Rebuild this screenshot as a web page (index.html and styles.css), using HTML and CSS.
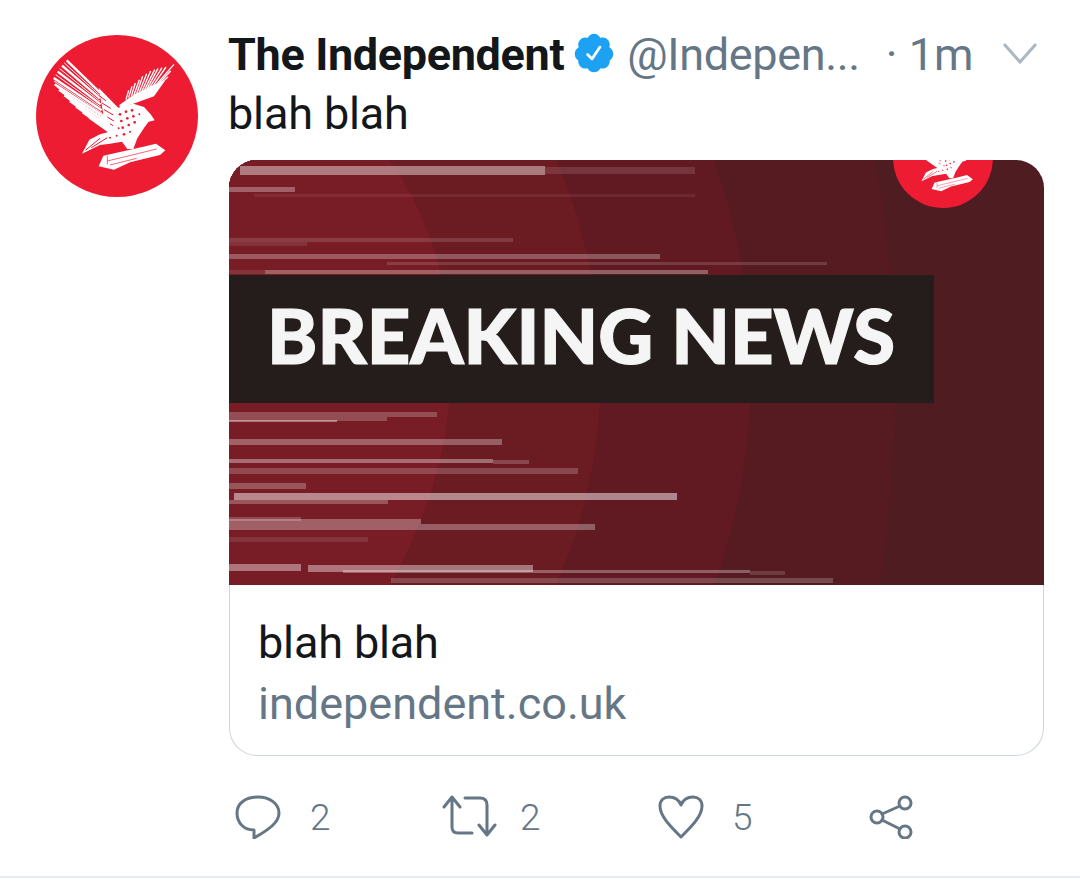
FILE: index.html
```html
<!DOCTYPE html>
<html lang="en">
<head>
<meta charset="utf-8">
<title>The Independent tweet</title>
<link rel="stylesheet" href="styles.css">
</head>
<body>
<svg class="defs" width="0" height="0" aria-hidden="true">
  <symbol id="eagle" viewBox="48 42 486 486">
    <path class="eagle-fill" d="M236 200 L296 262 L300 350 L226 306 L250 280 Z"/>
    <g class="feathers-left">
      <path d="M140 118 L240 215"/><path d="M126 134 L240 232"/><path d="M113 152 L242 250"/><path d="M101 171 L245 268"/>
      <path d="M104 190 L250 285"/><path d="M117 206 L256 300"/><path d="M133 223 L262 315"/><path d="M150 240 L270 325"/>
      <path d="M168 257 L278 335"/><path d="M188 274 L285 342"/><path d="M208 290 L290 348"/>
    </g>
    <g class="feathers-fine">
      <path d="M133 126 L240 224"/><path d="M119 143 L240 241"/><path d="M107 161 L243 259"/><path d="M102 180 L247 277"/>
      <path d="M110 198 L253 293"/><path d="M125 214 L259 308"/><path d="M141 231 L266 320"/><path d="M159 248 L274 330"/>
      <path d="M178 265 L281 339"/><path d="M198 282 L288 345"/>
    </g>
    <g class="hatch-left">
      <path d="M238 224 L258 240"/><path d="M246 246 L272 262"/><path d="M252 266 L280 282"/><path d="M262 288 L288 304"/><path d="M270 308 L294 324"/>
    </g>
    <path class="eagle-fill" d="M298 252 L340 222 L392 196 L436 178 L402 226 L340 248 L300 262 Z"/>
    <g class="feathers-right">
      <path d="M318 236 L326 208"/><path d="M326 230 L336 196"/><path d="M334 226 L346 186"/><path d="M342 222 L358 176"/>
      <path d="M350 218 L368 166"/><path d="M358 214 L380 158"/><path d="M366 210 L392 150"/><path d="M374 206 L404 146"/>
      <path d="M382 202 L414 142"/><path d="M390 198 L426 140"/><path d="M398 196 L438 138"/><path d="M406 194 L462 130"/>
      <path d="M414 190 L452 150"/><path d="M420 188 L444 168"/>
    </g>
    <path class="eagle-fill" d="M290 262 L340 248 L372 258 L392 280 L404 298 L386 302 L374 318 L352 352 L340 384 L322 384 L306 362 L270 368 L240 372 L186 398 L208 356 L240 340 L276 330 Z"/>
    <g class="eagle-cuts">
      <path d="M196 388 L240 352"/><path d="M214 380 L262 350"/>
    </g>
    <path class="eagle-fill" d="M236 436 L250 404 L350 382 L408 368 L436 388 L420 402 L330 424 L282 446 Z"/>
    <g class="eagle-dots">
      <circle cx="300" cy="280" r="4"/><circle cx="318" cy="272" r="4"/><circle cx="336" cy="268" r="4"/>
      <circle cx="304" cy="300" r="4"/><circle cx="322" cy="292" r="4"/><circle cx="340" cy="286" r="4"/><circle cx="358" cy="280" r="3"/>
      <circle cx="308" cy="320" r="4"/><circle cx="326" cy="312" r="4"/><circle cx="344" cy="304" r="4"/>
      <circle cx="296" cy="322" r="3"/><circle cx="290" cy="344" r="3"/><circle cx="312" cy="340" r="4"/><circle cx="330" cy="332" r="3"/>
      <circle cx="270" cy="350" r="3"/>
    </g>
    <path class="eagle-line" d="M262 420 L410 384 M270 432 L350 412 M262 404 L262 430"/>
  </symbol>
</svg>

<article class="tweet">
  <svg class="avatar" viewBox="0 0 162 162" role="img" aria-label="The Independent logo">
    <circle class="logo-red" cx="81" cy="81" r="81"/>
    <use href="#eagle" width="162" height="162"/>
  </svg>

  <div class="content">
    <header class="meta">
      <span class="name">The Independent</span>
      <svg class="badge" viewBox="0 0 24 24" aria-label="Verified"><path d="M22.5 12.5c0-1.58-.875-2.95-2.148-3.6.154-.435.238-.905.238-1.4 0-2.21-1.71-3.998-3.818-3.998-.47 0-.92.084-1.336.25C14.818 2.415 13.51 1.5 12 1.5s-2.816.917-3.437 2.25c-.415-.165-.866-.25-1.336-.25-2.11 0-3.818 1.79-3.818 4 0 .494.083.964.237 1.4-1.272.65-2.147 2.018-2.147 3.6 0 1.495.782 2.798 1.942 3.486-.02.17-.032.34-.032.514 0 2.21 1.708 4 3.818 4 .47 0 .92-.086 1.335-.25.62 1.334 1.926 2.25 3.437 2.25 1.512 0 2.818-.916 3.437-2.25.415.163.865.248 1.336.248 2.11 0 3.818-1.79 3.818-4 0-.174-.012-.344-.033-.513 1.158-.687 1.943-1.99 1.943-3.484zm-6.616-3.334l-4.334 6.5c-.145.217-.382.334-.625.334-.143 0-.288-.04-.416-.126l-.115-.094-2.415-2.415c-.293-.293-.293-.768 0-1.06s.768-.294 1.06 0l1.77 1.767 3.825-5.74c.23-.345.696-.436 1.04-.207.346.23.44.696.21 1.04z"/></svg>
      <span class="handle">@Indepen...</span>
      <span class="time">· 1m</span>
      <svg class="chevron" viewBox="0 0 36 22"><path d="M2 2 L18 20 L34 2"/></svg>
    </header>
    <p class="text">blah blah</p>

    <div class="card">
      <svg class="art" viewBox="229 160 815 425" role="img" aria-label="Breaking news">
        <rect class="band5" x="229" y="160" width="815" height="425"/>
        <path class="band4" d="M229 160 L875 160 C900 280 902 450 880 585 L229 585 Z"/>
        <path class="band3" d="M229 160 L714 160 C750 260 774 420 714 585 L229 585 Z"/>
        <path class="band2" d="M229 160 L556 160 C600 260 629 420 556 585 L229 585 Z"/>
        <path class="band1" d="M229 160 L390 160 C460 260 483 420 390 585 L229 585 Z"/>

        <g class="streaks">
          <rect x="240" y="166" width="305" height="9" opacity=".42"/>
          <rect x="545" y="167" width="150" height="7" opacity=".12"/>
          <rect x="229" y="187" width="66" height="5" opacity=".3"/>
          <rect x="254" y="194" width="441" height="3" opacity=".07"/>
          <rect x="229" y="238" width="284" height="4" opacity=".14"/>
          <rect x="229" y="242" width="78" height="4" opacity=".1"/>
          <rect x="229" y="254" width="431" height="5" opacity=".27"/>
          <rect x="387" y="262" width="440" height="3" opacity=".14"/>
          <rect x="265" y="270" width="443" height="4" opacity=".3"/>
          <rect x="229" y="270" width="36" height="4" opacity=".1"/>

          <rect x="229" y="412" width="208" height="5" opacity=".22"/>
          <rect x="229" y="417" width="158" height="4" opacity=".22"/>
          <rect x="229" y="420" width="108" height="2" opacity=".4"/>
          <rect x="229" y="439" width="273" height="6" opacity=".3"/>
          <rect x="229" y="459" width="264" height="4" opacity=".36"/>
          <rect x="493" y="460" width="36" height="4" opacity=".2"/>
          <rect x="229" y="468" width="349" height="6" opacity=".2"/>
          <rect x="229" y="483" width="77" height="6" opacity=".25"/>
          <rect x="234" y="493" width="443" height="7" opacity=".48"/>
          <rect x="229" y="500" width="159" height="4" opacity=".25"/>
          <rect x="229" y="517" width="72" height="4" opacity=".2"/>
          <rect x="229" y="519" width="192" height="5" opacity=".3"/>
          <rect x="229" y="524" width="366" height="6" opacity=".3"/>
          <rect x="229" y="537" width="139" height="5" opacity=".1"/>
          <rect x="229" y="564" width="72" height="7" opacity=".4"/>
          <rect x="308" y="565" width="225" height="7" opacity=".4"/>
          <rect x="343" y="570" width="407" height="3" opacity=".3"/>
          <rect x="750" y="571" width="35" height="4" opacity=".15"/>
          <rect x="391" y="578" width="442" height="5" opacity=".2"/>
        </g>

        <circle class="logo-red" cx="943" cy="158" r="50"/>
        <use href="#eagle" x="893" y="108" width="100" height="100"/>

        <rect class="strap" x="229" y="275" width="705" height="128"/>
        <text class="headline" x="267" y="364" textLength="628" lengthAdjust="spacingAndGlyphs">BREAKING NEWS</text>
      </svg>
      <div class="card-body">
        <div class="card-title">blah blah</div>
        <div class="card-domain">independent.co.uk</div>
      </div>
    </div>

    <footer class="actions">
      <div class="action">
        <svg class="icon icon-reply" viewBox="0 0 46 44"><path d="M19 35 C9 35 2 28 2 18 C2 8 11 2 23 2 C35 2 44 9 44 18 C44 27 35 34 19 43 Z"/></svg>
        <span class="count count-reply">2</span>
      </div>
      <div class="action">
        <svg class="icon icon-retweet" viewBox="0 0 56 44"><path d="M2 12 L10 2 L18 12 M10 3 L10 32 Q10 38 16 38 L30 38 M23 3 L38 3 Q45 3 45 10 L45 39 M37 30 L45 40 L53 30"/></svg>
        <span class="count count-retweet">2</span>
      </div>
      <div class="action">
        <svg class="icon icon-heart" viewBox="0 0 48 44"><path d="M24 42 C13 31 3 21 3 11 C3 5 7 2 12 2 C18 2 22 5 24 10 C26 5 30 2 36 2 C41 2 45 5 45 11 C45 21 35 31 24 42 Z"/></svg>
        <span class="count count-heart">5</span>
      </div>
      <div class="action">
        <svg class="icon icon-share" viewBox="0 0 46 44"><circle cx="36" cy="8" r="6"/><circle cx="8" cy="22" r="6"/><circle cx="36" cy="37" r="6"/><path d="M13 19 L31 11 M13 25 L31 34"/></svg>
      </div>
    </footer>
  </div>
</article>
</body>
</html>
```

FILE: styles.css
```css
* {
  box-sizing: border-box;
}

html,
body {
  margin: 0;
  background: #fff;
}

body {
  font-family: Roboto, "Liberation Sans", sans-serif;
  color: #14171a;
  height: 886px;
  overflow: hidden;
}

.defs {
  display: block;
  height: 0;
}

.tweet {
  display: flex;
  align-items: flex-start;
  gap: 31px;
  height: 878px;
  padding: 26px 36px 0;
  border-bottom: 2px solid #e6ecf0;
}

.avatar {
  flex: none;
  width: 162px;
  height: 162px;
  margin-top: 9px;
}

.logo-red {
  fill: #ed1c33;
}

.feathers-left path {
  stroke: #fff;
  stroke-width: 7;
  fill: none;
}

.feathers-fine path {
  stroke: #fff;
  stroke-width: 3;
  fill: none;
}

.hatch-left path {
  stroke: #ed1c33;
  stroke-width: 3;
  fill: none;
}

.feathers-right path {
  stroke: #fff;
  stroke-width: 4;
  fill: none;
}

.eagle-fill {
  fill: #fff;
}

.eagle-dots circle {
  fill: #ed1c33;
}

.eagle-cuts path {
  stroke: #ed1c33;
  stroke-width: 3;
  fill: none;
}

.eagle-line {
  stroke: #ed1c33;
  stroke-width: 2;
  fill: none;
}

.content {
  width: 815px;
  flex: none;
}

.meta {
  display: flex;
  align-items: center;
  height: 56px;
  font-size: 45px;
  white-space: nowrap;
}

.name {
  font-weight: 700;
  letter-spacing: -0.35px;
  margin-left: -1px;
}

.badge {
  width: 44px;
  height: 44px;
  margin-left: 8px;
  margin-top: -3px;
  fill: #1da1f2;
}

.handle {
  color: #657786;
  margin-left: 11px;
  letter-spacing: -0.35px;
}

.time {
  color: #657786;
  margin-left: 26px;
}

.chevron {
  width: 36px;
  height: 22px;
  margin-left: auto;
  margin-right: 6px;
  margin-top: -2px;
  fill: none;
  stroke: #aab8c2;
  stroke-width: 3;
}

.text {
  margin: 3px 0 0 -1px;
  font-size: 45px;
  line-height: 58px;
  letter-spacing: -0.15px;
}

.card {
  margin-top: 17px;
  width: 815px;
}

.art {
  display: block;
  width: 815px;
  height: 425px;
  border-radius: 28px 28px 0 0;
}

.band1 { fill: #781c25; }
.band2 { fill: #6b1b22; }
.band3 { fill: #611a21; }
.band4 { fill: #561b21; }
.band5 { fill: #4f1c21; }

.streaks {
  filter: blur(0.6px);
}

.streaks rect {
  fill: #fff;
}

.strap {
  fill: #251c1c;
}

.headline {
  font-family: Lato, "Open Sans", sans-serif;
  font-weight: 900;
  font-size: 76px;
  fill: #f5f5f5;
  stroke: #f5f5f5;
  stroke-width: 1.2px;
}

.card-body {
  height: 171px;
  padding: 29px 28px 0;
  border: 1px solid #ccd6dd;
  border-top: 0;
  border-radius: 0 0 28px 28px;
}

.card-title {
  font-size: 45px;
  line-height: 58px;
  letter-spacing: -0.15px;
}

.card-domain {
  font-size: 45px;
  line-height: 64px;
  color: #657786;
}

.actions {
  display: grid;
  grid-template-columns: 207px 215px 212px 100px;
  margin-top: 39px;
  padding-left: 6px;
}

.action {
  display: flex;
  align-items: center;
  height: 44px;
}

.icon {
  flex: none;
  fill: none;
  stroke: #657786;
  stroke-width: 3;
  stroke-linejoin: round;
  stroke-linecap: round;
}

.icon-reply {
  width: 46px;
  height: 44px;
}

.icon-retweet {
  width: 56px;
  height: 44px;
}

.icon-heart {
  width: 48px;
  height: 44px;
}

.icon-share {
  width: 46px;
  height: 44px;
}

.count {
  font-size: 37px;
  font-weight: 300;
  color: #657786;
}

.count-reply {
  margin-left: 29px;
}

.count-retweet {
  margin-left: 22px;
}

.count-heart {
  margin-left: 27px;
}
```
